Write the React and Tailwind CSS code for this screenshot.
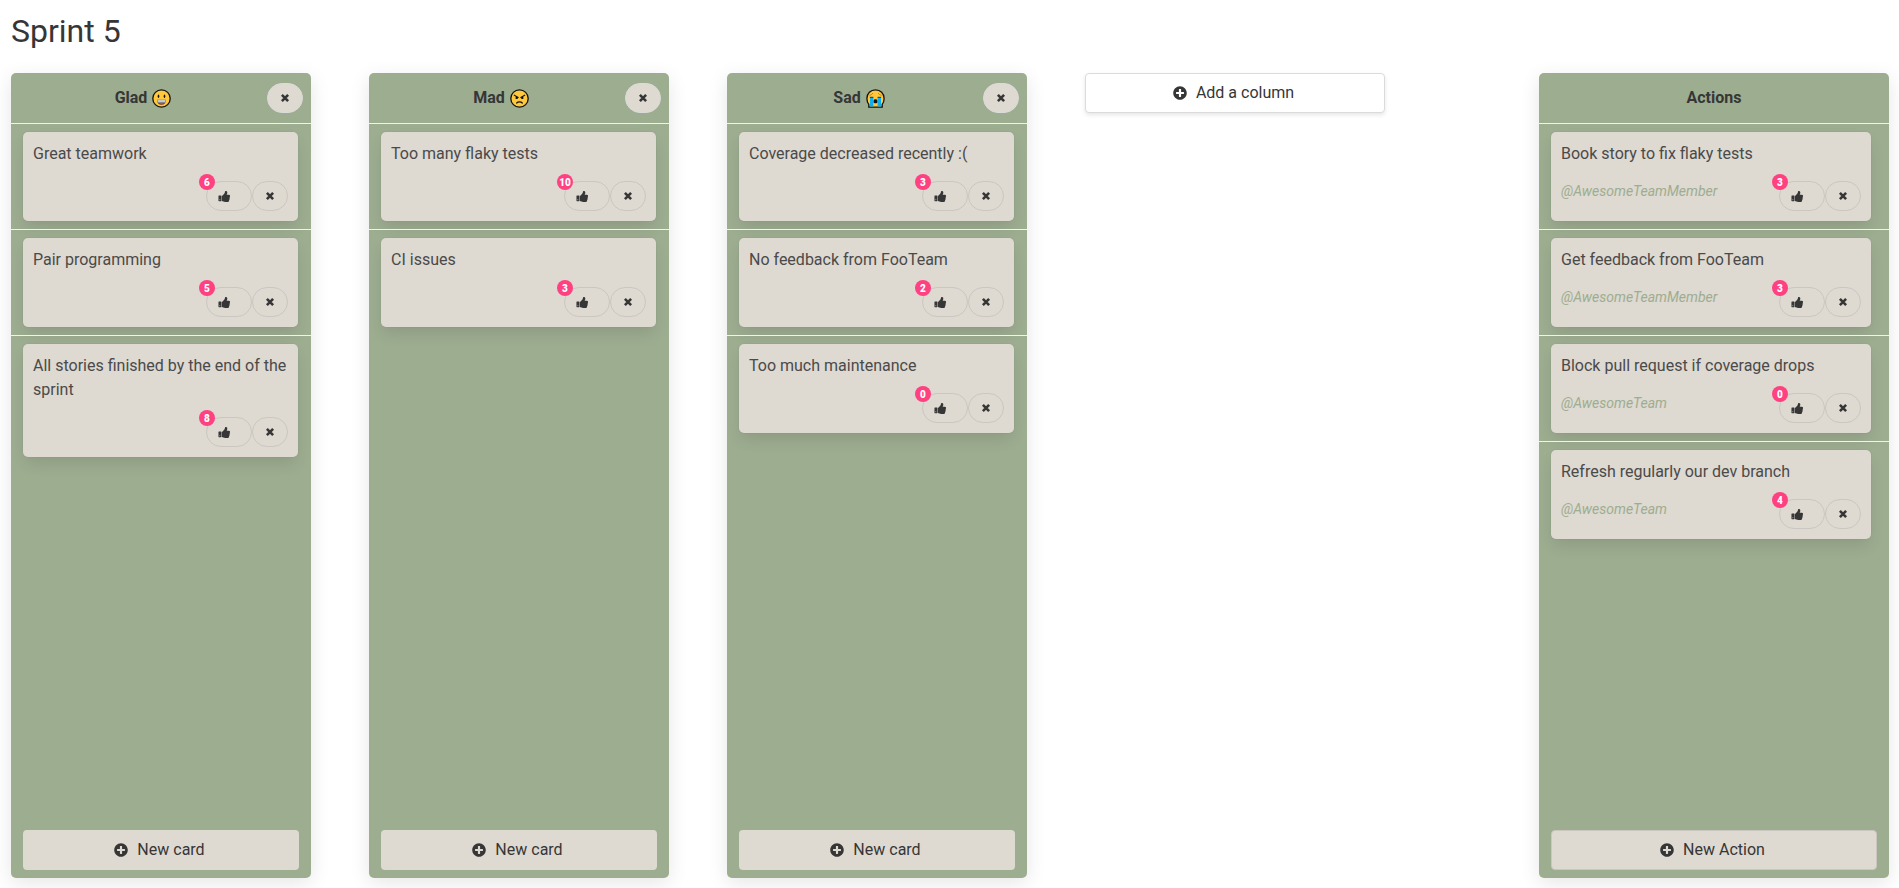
import React from 'react';
import { FaPlusCircle } from 'react-icons/fa';

const columns = [
  {
    title: 'Glad',
    mood: 'glad',
    cards: [
      { text: 'Great teamwork', likes: 6 },
      { text: 'Pair programming', likes: 5 },
      { text: 'All stories finished by the end of the sprint', likes: 8 },
    ],
  },
  {
    title: 'Mad',
    mood: 'mad',
    cards: [
      { text: 'Too many flaky tests', likes: 10 },
      { text: 'CI issues', likes: 3 },
    ],
  },
  {
    title: 'Sad',
    mood: 'sad',
    cards: [
      { text: 'Coverage decreased recently :(', likes: 3 },
      { text: 'No feedback from FooTeam', likes: 2 },
      { text: 'Too much maintenance', likes: 0 },
    ],
  },
];

const actions = [
  { text: 'Book story to fix flaky tests', owner: '@AwesomeTeamMember', likes: 3 },
  { text: 'Get feedback from FooTeam', owner: '@AwesomeTeamMember', likes: 3 },
  { text: 'Block pull request if coverage drops', owner: '@AwesomeTeam', likes: 0 },
  { text: 'Refresh regularly our dev branch', owner: '@AwesomeTeam', likes: 4 },
];

function Mood({ mood }) {
  return (
    <svg className="size-[19px]" viewBox="0 0 19 19" role="img" aria-label={mood}>
      {mood === 'sad' ? (
        <path d="M9.5.8C4.600.8.9 4.500.9 9.500c0 2.600.8 4.500 1.900 5.900v2.700h13.400v-2.700c1.200-1.400 1.900-3.300 1.900-5.900C18.100 4.500 14.400.8 9.500.8z" fill="#ffc83d" stroke="#111" strokeWidth="1.300" />
      ) : (
        <circle cx="9.5" cy="9.5" r="8.700" fill="#ffc83d" stroke="#111" strokeWidth="1.300" />
      )}
      {mood === 'glad' && (
        <>
          <ellipse cx="6.500" cy="7.300" rx=".8" ry="1.700" fill="#111" />
          <ellipse cx="12.500" cy="7.300" rx=".8" ry="1.700" fill="#111" />
          <path d="M5 10.700h9c0 3-1.600 5-4.500 5s-4.500-2-4.500-5z" fill="#4a4a4a" />
          <path d="M5.300 10.700h8.400c0 1.300-.3 2.200-.9 2.800H6.200c-.6-.6-.9-1.500-.9-2.800z" fill="#c8c8c8" />
          <path d="M7.200 14.500c1-.9 3.600-.9 4.600 0-1 1.400-3.600 1.400-4.600 0z" fill="#f03a17" />
        </>
      )}
      {mood === 'mad' && (
        <>
          <path d="M4.300 6.200l3.900 2.200M14.700 6.200l-3.900 2.200" stroke="#111" strokeWidth="1.100" strokeLinecap="round" />
          <circle cx="6.700" cy="8.900" r="1.200" fill="#111" />
          <circle cx="12.300" cy="8.900" r="1.200" fill="#111" />
          <path d="M6.700 14c1.300-1.500 4.300-1.500 5.600 0" fill="none" stroke="#111" strokeWidth="1.200" strokeLinecap="round" />
        </>
      )}
      {mood === 'sad' && (
        <>
          <path d="M3.800 6.200c1.300-.2 2.200-.8 2.800-1.800M15.200 6.200c-1.300-.2-2.200-.8-2.800-1.800" fill="none" stroke="#c27c1a" strokeWidth="1" strokeLinecap="round" />
          <path d="M4 8.600h3.400v8.800H4zM11.600 8.600H15v8.800h-3.400z" fill="#10aeeb" />
          <path d="M3.800 8.300h3.600M11.600 8.300h3.600" stroke="#333" strokeWidth="1" />
          <path d="M7.600 12c0-2.500 3.800-2.500 3.800 0v1.300c0 1.300-3.800 1.300-3.800 0z" fill="#111" />
        </>
      )}
    </svg>
  );
}

function CrossIcon() {
  return (
    <svg className="size-[10px]" viewBox="0 0 10 10" aria-hidden="true">
      <path d="M1.900 1.900l6.200 6.200M8.100 1.900L1.900 8.100" stroke="currentColor" strokeWidth="2.600" />
    </svg>
  );
}

function ThumbIcon() {
  return (
    <svg className="size-[13px]" viewBox="0 0 1792 1792" fill="currentColor" aria-hidden="true">
      <path d="M320 1344q0-26-19-45t-45-19q-27 0-45.500 19t-18.500 45q0 27 18.500 45.500t45.500 18.500q26 0 45-18.500t19-45.500zm160-512v640q0 26-19 45t-45 19h-288q-26 0-45-19t-19-45v-640q0-26 19-45t45-19h288q26 0 45 19t19 45zm1184 0q0 86-55 149 15 44 15 76 3 76-43 137 17 56 0 117-15 57-54 94 9 112-49 181-64 76-197 78h-129q-66 0-144-15.500t-121.500-29-120.500-39.500q-123-43-158-44-26-1-45-19.500t-19-44.500v-641q0-25 18-43.500t43-20.500q24-2 76-59t101-121q68-87 101-120 18-18 31-48t17.500-48.500 13.500-60.500q7-39 12.500-61t19.500-52 34-50q19-19 45-19 46 0 82.500 10.500t60 26 40 40.500 24 45 12 50 5 45 .5 39q0 38-9.500 76t-19 60-27.500 56q-3 6-10 18t-11 22-8 24h277q78 0 135 57t57 135z" />
    </svg>
  );
}

function CloseButton({ label, className }) {
  return (
    <button aria-label={label} className={`flex h-[30px] w-9 items-center justify-center rounded-[15px] border text-[#363636] ${className}`}>
      <CrossIcon />
    </button>
  );
}

function AddButton({ children, className }) {
  return (
    <button className={`flex h-10 w-full items-center justify-center rounded border text-[#363636] ${className}`}>
      <span className="-ml-2 mr-1 flex size-6 items-center justify-center">
        <FaPlusCircle className="size-[14px]" />
      </span>
      {children}
    </button>
  );
}

function Card({ card }) {
  return (
    <article className="rounded-[5px] bg-[#ded9d1] p-[10px] shadow-[0_8px_16px_-2px_rgba(10,10,10,0.1),0_0_0_1px_rgba(10,10,10,0.02)]">
      <p className="text-[#4a4a4a]">{card.text}</p>
      <div className="mt-[15px] flex items-start">
        {card.owner && <em className="text-sm/[21px] text-[#9dad90]">{card.owner}</em>}
        <div className="ml-auto flex">
          <button aria-label="Like" className="relative flex h-[30px] w-[46px] items-center rounded-[15px] border border-[#cbc6bf] pl-[11px] text-[#363636]">
            <ThumbIcon />
            <span className="absolute -top-2 -left-2 flex size-4 items-center justify-center rounded-full bg-[#ff4081] text-[10px] font-black text-white">
              {card.likes}
            </span>
          </button>
          <CloseButton label="Delete card" className="border-[#cbc6bf]" />
        </div>
      </div>
    </article>
  );
}

function Column({ title, mood, cards, addLabel, className, listClassName, addClassName }) {
  return (
    <section className={`flex shrink-0 flex-col rounded-[5px] bg-[#9dad90] shadow-[0_5px_20px_rgba(10,10,10,0.1)] ${className}`}>
      <header className="flex h-[50px] items-center px-2">
        <h2 className="flex flex-1 items-center justify-center gap-[5px] font-bold text-[#363636]">
          {title}
          {mood && <Mood mood={mood} />}
        </h2>
        {mood && <CloseButton label="Delete column" className="border-[#dbdbdb] bg-[#ded9d1]" />}
      </header>
      <ul className="flex-1">
        {cards.map((card) => (
          <li key={card.text} className={`border-t border-[#f0f2ee] py-2 pl-3 ${listClassName}`}>
            <Card card={card} />
          </li>
        ))}
      </ul>
      <div className="px-3 py-2">
        <AddButton className={addClassName}>{addLabel}</AddButton>
      </div>
    </section>
  );
}

export default function App() {
  return (
    <div className="flex min-h-screen flex-col bg-white pt-[13px] pr-[10px] pb-[10px] pl-[11px] font-['Roboto',sans-serif] text-base">
      <h1 className="text-[32px]/[36px] text-[#363636]">Sprint 5</h1>
      <main className="mt-6 flex flex-1 gap-[58px]">
        {columns.map((column) => (
          <Column
            key={column.title}
            {...column}
            addLabel="New card"
            className="w-[300px]"
            listClassName="pr-[13px]"
            addClassName="border-transparent bg-[#ded9d1]"
          />
        ))}
        <div className="w-[300px] shrink-0">
          <AddButton className="border-[#dbdbdb] bg-white shadow-[0_2px_4px_rgba(10,10,10,0.1)]">Add a column</AddButton>
        </div>
        <Column
          title="Actions"
          cards={actions}
          addLabel="New Action"
          className="ml-auto w-[350px]"
          listClassName="pr-[18px]"
          addClassName="border-[#cbc6bf] bg-[#ded9d1]"
        />
      </main>
    </div>
  );
}
